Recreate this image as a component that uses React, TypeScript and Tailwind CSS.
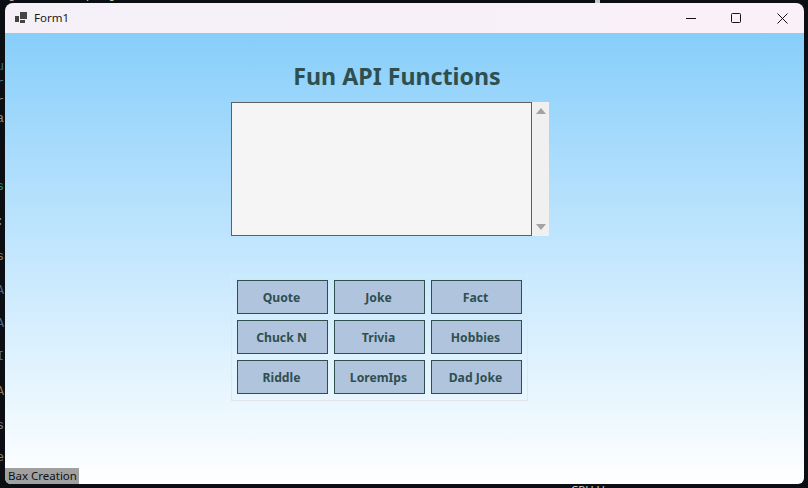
const labels = ["Quote", "Joke", "Fact", "Chuck N", "Trivia", "Hobbies", "Riddle", "LoremIps", "Dad Joke"];

const slivers = [
  { text: "u", cls: "top-[59px] text-[#2f6f6f]" },
  { text: "r", cls: "top-[76px] text-[#4a7088]" },
  { text: "or", cls: "top-[94px] text-[#8f8068]" },
  { text: "ca", cls: "top-[111px] text-[#8f8a78]" },
  { text: "Us", cls: "top-[179px] text-[#2a9070]" },
  { text: "1:", cls: "top-[214px] text-[#80848a]" },
  { text: "s", cls: "top-[249px] text-[#8f8068]" },
  { text: "A", cls: "top-[283px] text-[#4a6a88]" },
  { text: "A", cls: "top-[316px] text-[#4a6a88]" },
  { text: "I", cls: "top-[349px] text-[#4a6a88]" },
  { text: "A", cls: "top-[384px] text-[#8f7558]" },
  { text: "es", cls: "top-[418px] text-[#80848a]" },
  { text: "e", cls: "top-[450px] text-[#8f8068]" },
];

export default function App() {
  return (
    <div className="relative h-[488px] w-[808px] overflow-hidden bg-[#0b0e13] font-['Noto_Sans',sans-serif]">
      <span className="absolute left-0 top-[-14px] whitespace-nowrap font-['Liberation_Mono',monospace] text-[13px] leading-[18px] text-[#c4c8b0]">ng for the project.</span>
      <span className="absolute left-[571px] top-[483px] whitespace-nowrap text-[11.5px] leading-[14px] text-[#c8ccd0]">CPU Usage</span>
      <div className="absolute left-[595px] top-0 h-[3px] w-[5px] bg-[#c8c8c8]" />
      {slivers.map((s) => (
        <span key={s.cls} className={`absolute right-[804px] whitespace-nowrap font-['Liberation_Mono',monospace] text-[13px] leading-[16px] ${s.cls}`}>
          {s.text}
        </span>
      ))}
      <div className="absolute left-[5px] top-[3px] flex h-[481px] w-[799px] flex-col overflow-hidden rounded-t-[8px] rounded-b-[6px]">
        <div className="flex h-[30px] shrink-0 items-center bg-gradient-to-r from-[#f5f0f8] to-[#faf0f8]">
          <svg className="ml-[10px]" width="12" height="12" viewBox="0 0 12 12" fill="#444">
            <rect x="0" y="4" width="4" height="6" />
            <rect x="5" y="0" width="7" height="7" />
            <rect x="5" y="8" width="5" height="3" />
          </svg>
          <span className="ml-[7px] text-[11.5px] text-[#1a1a1a]">Form1</span>
          <div className="ml-auto flex h-full items-center">
            <svg className="mr-[35px]" width="10" height="10" viewBox="0 0 10 10" stroke="#111" fill="none">
              <path d="M0 5.5H10" />
            </svg>
            <svg className="mr-[36px]" width="10" height="10" viewBox="0 0 10 10" stroke="#111" fill="none">
              <rect x="0.5" y="0.5" width="9" height="9" rx="1" />
            </svg>
            <svg className="mr-[16px]" width="11" height="11" viewBox="0 0 11 11" stroke="#111" fill="none">
              <path d="M0.5 0.5L10.5 10.5M10.5 0.5L0.5 10.5" />
            </svg>
          </div>
        </div>
        <div className="relative flex min-h-0 flex-1 flex-col bg-gradient-to-b from-[#87cefa] to-white pl-[226px]">
          <h1 className="mt-[27px] h-[32px] w-[332px] text-center text-[23.2px] font-bold leading-[32px] text-[#2f4f4f]">Fun API Functions</h1>
          <div className="mt-[10px] flex h-[134px] w-[318px]">
            <div className="w-[301px] border border-[#5f5f5f] bg-[#f5f5f5]" />
            <div className="flex w-[17px] flex-col items-center justify-between bg-[#f0f0f0] py-[6px]">
              <svg width="10" height="6" viewBox="0 0 10 6" fill="#a3a3a3"><path d="M5 0L10 6H0Z" /></svg>
              <svg width="10" height="6" viewBox="0 0 10 6" fill="#a3a3a3"><path d="M0 0H10L5 6Z" /></svg>
            </div>
          </div>
          <div className="mt-[39px] grid w-[297px] grid-cols-[91px_91px_91px] gap-x-[6px] gap-y-[6px] border border-[#e2e6ea] pb-[6px] pl-[5px] pr-[5px] pt-[4px]">
            {labels.map((label) => (
              <button key={label} className="h-[34px] border border-[#2f4f4f] bg-[#b0c4de] pr-[2px] pt-[2px] text-[12.2px] font-bold text-[#2f4f4f]">
                {label}
              </button>
            ))}
          </div>
          <div className="absolute bottom-0 left-0 flex h-[16px] w-[74px] items-center whitespace-nowrap bg-[#a0a0a0] pl-[3px] text-[11.5px] text-[#111]">Bax Creation</div>
        </div>
      </div>
    </div>
  );
}
